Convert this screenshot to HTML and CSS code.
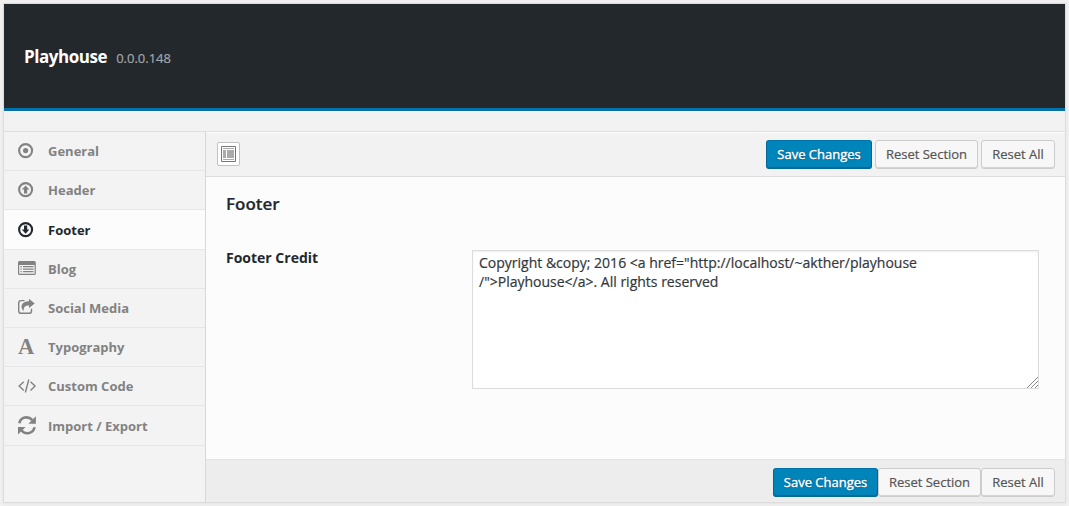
FILE: index.html
```html
<!DOCTYPE html>
<html lang="en">
<head>
<meta charset="utf-8">
<title>Playhouse</title>
<link rel="stylesheet" href="styles.css">
</head>
<body>
<div class="panel">
  <header class="header"><h1 class="title">Playhouse</h1><span class="version">0.0.0.148</span></header>
  <div class="strip"></div>
  <div class="main">
    <nav class="sidebar">
      <a class="item"><svg class="icon" viewBox="0 0 18 18"><circle cx="7.6" cy="8.6" r="6.5" fill="none" stroke="currentColor" stroke-width="2.1"/><circle cx="7.6" cy="8.6" r="2.6"/></svg><span>General</span></a>
      <a class="item"><svg class="icon" viewBox="0 0 18 18"><circle cx="7.6" cy="8.6" r="6.5" fill="none" stroke="currentColor" stroke-width="2.1"/><path d="M7.6 4.4 11.4 8.6H9.2v4H6v-4H3.8z"/></svg><span>Header</span></a>
      <a class="item active tall"><svg class="icon" viewBox="0 0 18 18"><circle cx="7.6" cy="8.6" r="6.5" fill="none" stroke="currentColor" stroke-width="2.1"/><path d="M7.6 12.8 11.4 8.6H9.2v-4H6v4H3.8z"/></svg><span>Footer</span></a>
      <a class="item"><svg class="icon" viewBox="0 0 18 18"><path fill-rule="evenodd" d="M1.5 1h14.7Q17.8 1 17.8 2.6V13.4Q17.8 15 16.2 15H1.5Q0 15 0 13.4V2.6Q0 1 1.5 1zM1.2 5V13.2Q1.2 13.8 1.8 13.8H16Q16.6 13.8 16.6 13.2V5z"/><path d="M2.5 6h1.3v1.2H2.5zM5 6h10.5v1.2H5zM2.5 8.5h1.3v1.2H2.5zM5 8.5h10.5v1.2H5zM2.5 11h1.3v1.2H2.5zM5 11h10.5v1.2H5z"/></svg><span>Blog</span></a>
      <a class="item"><svg class="icon" viewBox="0 0 18 18"><path d="M6.5 1.6H3.1Q.7 1.6.7 4v7.9q0 2.4 2.4 2.4h8q2.4 0 2.4-2.4V9.8" fill="none" stroke="currentColor" stroke-width="1.4"/><path d="M11 -.2 16.7 4.4 11 9V6.6C7.3 6.5 5.3 7.8 5.7 12.2 1.4 7.7 3.5 2.5 11 2.2z"/></svg><span>Social Media</span></a>
      <a class="item"><span class="icon letter">A</span><span>Typography</span></a>
      <a class="item"><svg class="icon" viewBox="0 0 18 18"><path d="M5.8 4.7 1.2 9.1l4.6 4.4M12.5 4.7l4.6 4.4-4.6 4.4M10.8 2.5 7.4 15.5" fill="none" stroke="currentColor" stroke-width="1.4"/></svg><span>Custom Code</span></a>
      <a class="item tall"><svg class="icon" viewBox="0 0 18 18"><path d="M1.3 6.2C2.9-.1 10-1.4 14.3 3M16.6 10.3C15 16.7 7.8 18.1 3.5 13.6" fill="none" stroke="currentColor" stroke-width="2.6"/><path d="M17.9-.8v7.6h-7.6zM0 17.6V10h7.6z"/></svg><span>Import / Export</span></a>
    </nav>
    <section class="content">
      <div class="toolbar">
        <button class="expand" aria-label="Expand"><svg class="layout" viewBox="0 0 15 16"><path fill="#fff" stroke="#777" d="M.5.5h14v15H.5z"/><path fill="#aaa" d="M2 2h11v1H2zM2 4h3v8H2zM6 4h7v8H6zM2 13h11v1H2z"/></svg></button>
        <div class="buttons spaced"><button class="btn primary save-top">Save Changes</button><button class="btn section">Reset Section</button><button class="btn all">Reset All</button></div>
      </div>
      <div class="body">
        <h2 class="heading">Footer</h2>
        <div class="field">
          <label class="label" for="credit">Footer Credit</label>
          <div class="box"><textarea id="credit" class="credit" spellcheck="false">Copyright &amp;copy; 2016 &lt;a href="http://localhost/~akther/playhouse
/"&gt;Playhouse&lt;/a&gt;. All rights reserved</textarea><svg class="grip" viewBox="0 0 11 11"><path d="M0 11 11 0M4 11l7-7M8 11l3-3" fill="none" stroke="#888"/></svg></div>
        </div>
      </div>
      <div class="bottom"><div class="buttons"><button class="btn primary">Save Changes</button><button class="btn section">Reset Section</button><button class="btn all">Reset All</button></div></div>
    </section>
  </div>
</div>
</body>
</html>
```
FILE: styles.css
```css
* { box-sizing: border-box; }
body { margin: 0; padding: 3px; height: 506px; overflow: hidden; background: #f0f0f0; font-family: "Open Sans", sans-serif; font-size: 13px; color: #23282d; }
.panel { width: 1063px; height: 500px; border: 1px solid #dcdcdc; background: #f3f3f3; box-shadow: 0 1px 3px rgba(0,0,0,.05); display: flex; flex-direction: column; }
.header { height: 107px; background: #23282d; border-bottom: 3px solid #0073aa; padding: 41px 20px 0; display: flex; align-items: baseline; gap: 9px; }
.title { margin: 0; color: #fff; font-size: 17px; line-height: 24px; font-weight: 700; letter-spacing: -.45px; }
.version { color: #a3a6aa; font-size: 13px; -webkit-text-stroke: .2px #a3a6aa; }
.strip { height: 21px; background: #f2f2f2; border-top: 1px solid #fff; border-bottom: 1px solid #dedede; }
.main { flex: 1; display: flex; }
.sidebar { width: 202px; border-right: 1px solid #d8d8d8; }
.item { height: 39px; display: flex; align-items: center; gap: 12px; padding-left: 14px; border-bottom: 1px solid #e7e7e7; color: #828282; font-weight: 700; }
.tall { height: 40px; }
.active { background: #fcfcfc; color: #23282d; }
.icon { width: 18px; height: 18px; fill: currentColor; flex: none; overflow: visible; }
.letter { font: 700 22.5px/18px "Liberation Serif", serif; }
.content { flex: 1; display: flex; flex-direction: column; background: #fcfcfc; }
.toolbar { height: 45px; background: #f2f2f2; border-top: 1px solid #fff; border-bottom: 1px solid #dedede; display: flex; justify-content: space-between; align-items: flex-start; padding: 7px 10px 0 11px; }
.expand { width: 23px; height: 24px; margin-top: 2px; padding: 0; border: 1px solid #c2c2c2; border-radius: 2px; background: #fff; display: flex; align-items: center; justify-content: center; }
.layout { width: 15px; height: 16px; }
.buttons { display: flex; }
.spaced { gap: 3px; }
.btn { height: 29px; padding: 0 0 1px; border: 1px solid #ccc; border-radius: 3px; background: #f7f7f7; color: #555; font: 13px "Open Sans", sans-serif; box-shadow: inset 0 -1px 0 #d4d4d4; white-space: nowrap; -webkit-text-stroke: .2px currentColor; }
.primary { width: 105px; background: #0085ba; border-color: #0073aa #006799 #006799; color: #fff; box-shadow: inset 0 -1px 0 #006799; text-shadow: 0 -1px 1px #006799, 1px 0 1px #006799, 0 1px 1px #006799; -webkit-text-stroke: .4px #fff; }
.save-top { width: 106px; }
.section { width: 103px; }
.all { width: 74px; }
.body { flex: 1; padding: 14px 26px 0 20px; }
.heading { margin: 0; font-size: 17px; line-height: 25px; font-weight: 600; -webkit-text-stroke: .2px currentColor; }
.field { display: flex; justify-content: space-between; padding-top: 34px; }
.label { font-size: 14px; line-height: 16px; font-weight: 700; }
.box { position: relative; width: 567px; height: 139px; }
.credit { display: block; width: 100%; height: 100%; margin: 0; padding: 2px 6px; border: 1px solid #ddd; background: #fff; color: #32373c; font: 14px/19px "Open Sans", sans-serif; -webkit-text-stroke: .2px currentColor; resize: none; box-shadow: inset 0 1px 2px rgba(0,0,0,.07); white-space: pre-wrap; }
.grip { position: absolute; right: 1px; bottom: 1px; width: 11px; height: 11px; }
.bottom { height: 43px; background: #ededed; border-top: 1px solid #e3e3e3; display: flex; justify-content: flex-end; padding: 8px 10px 0; }
```
